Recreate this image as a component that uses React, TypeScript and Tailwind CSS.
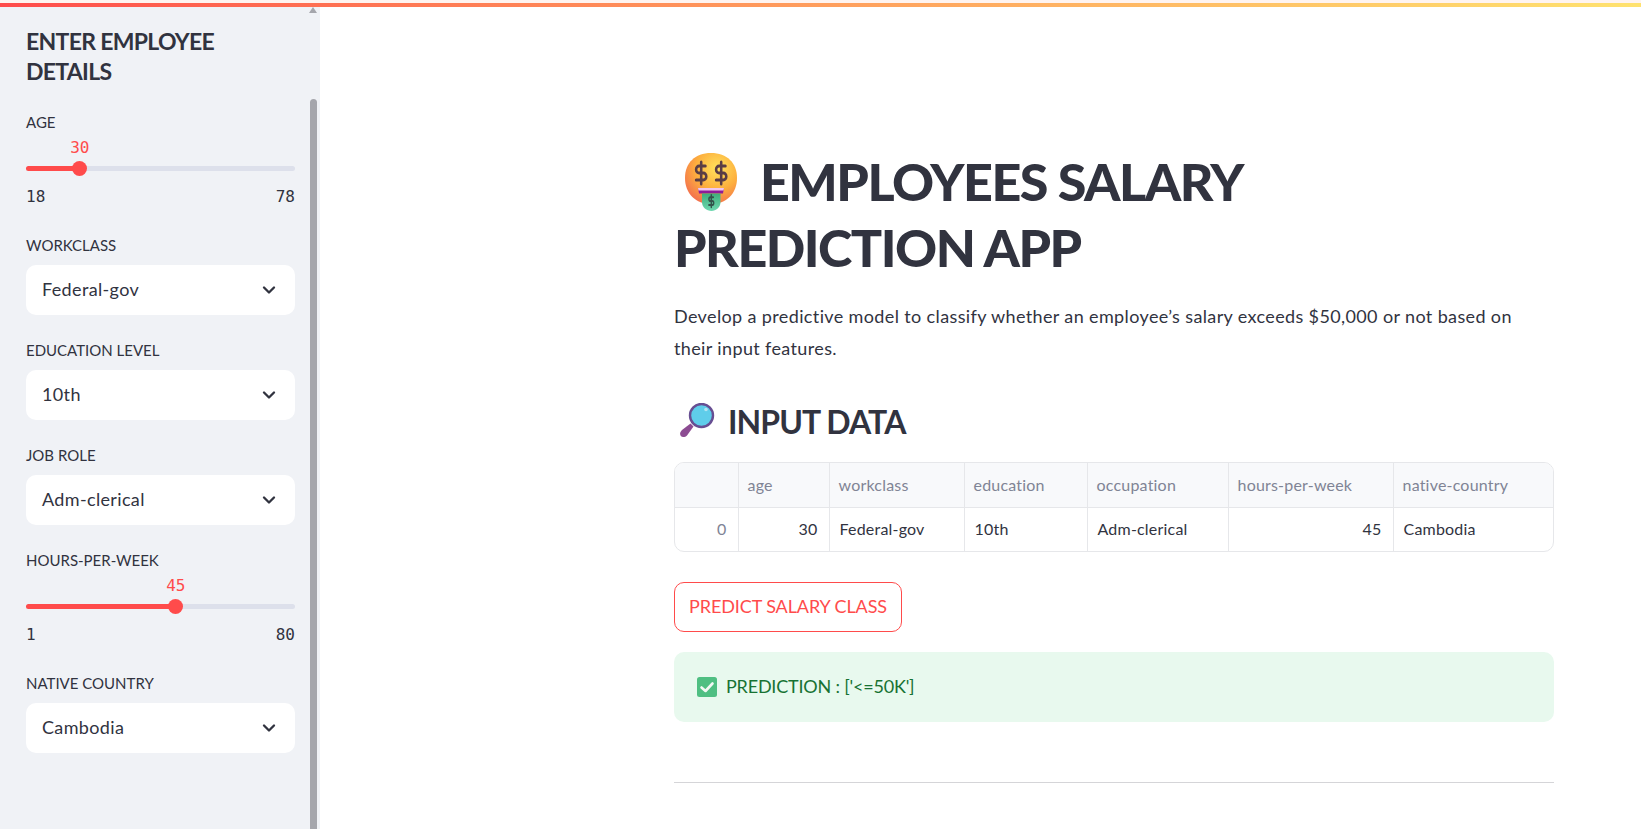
import { ChevronDown } from 'lucide-react';

const dollar = 'M12 1v22M17 5H9.5a3.5 3.5 0 0 0 0 7h5a3.5 3.5 0 0 1 0 7H6';

function MoneyFace() {
  return (
    <svg viewBox="0 0 54 58" className="w-[54px] h-[58px] shrink-0">
      <defs>
        <radialGradient id="face" cx="0.62" cy="0.3" r="0.75">
          <stop offset="0" stopColor="#ffe35c" />
          <stop offset="0.55" stopColor="#fdaf3e" />
          <stop offset="1" stopColor="#f36f4e" />
        </radialGradient>
        <linearGradient id="tongue" x1="0" y1="0" x2="0" y2="1">
          <stop offset="0" stopColor="#3fae7a" />
          <stop offset="1" stopColor="#6fd8b0" />
        </linearGradient>
      </defs>
      <path d="M27 0C43 0 53 10 53 25C53 41 42 51 27 51C12 51 1 41 1 25C1 10 11 0 27 0Z" fill="url(#face)" />
      <g fill="none" stroke="#5a3d45" strokeWidth="3" strokeLinecap="round" strokeLinejoin="round">
        <path transform="translate(7 8) scale(0.85 1)" d={dollar} />
        <path transform="translate(27 8) scale(0.85 1)" d={dollar} />
      </g>
      <path d="M14 35H40L39 40.500H15Z" fill="#8f1a98" />
      <path d="M14 35H40L39.500 37.500H14.500Z" fill="#f1c7ef" />
      <path d="M18 40.500H36.500V49C36.500 54.500 32 58 27.500 58C22.500 58 18 54.500 18 49Z" fill="url(#tongue)" />
      <g transform="translate(22.500 41.500) scale(0.4 0.55)" fill="none" stroke="#33524a" strokeWidth="3.600" strokeLinecap="round">
        <path d={dollar} />
      </g>
    </svg>
  );
}

function Magnifier() {
  return (
    <svg viewBox="0 0 35 35" className="w-[35px] h-[35px] shrink-0">
      <path d="M10.500 20.500L13.500 23.500L7 32.500C5 34.500 2 34.500 0.800 33C-0.500 31 0 29 2 27Z" fill="#8c4c92" />
      <circle cx="21.500" cy="12.500" r="11.500" fill="#5fcdea" stroke="#674e92" strokeWidth="2.400" />
      <circle cx="26" cy="6.500" r="1.800" fill="#b4e4f2" />
    </svg>
  );
}

function CheckBox() {
  return (
    <svg viewBox="0 0 20 20" className="w-5 h-5 shrink-0">
      <rect x="0" y="0" width="20" height="20" rx="2.500" fill="#4fbf82" />
      <path d="M4.500 10.500L8.500 14L15.500 6.500" fill="none" stroke="#f3f8f4" strokeWidth="2.600" strokeLinecap="round" strokeLinejoin="round" />
    </svg>
  );
}

function FieldLabel({ children }: { children: string }) {
  return <div className="h-5 text-[15px] leading-5 text-[#31333f]">{children}</div>;
}

function SelectField({ label, value }: { label: string; value: string }) {
  return (
    <div>
      <FieldLabel>{label}</FieldLabel>
      <div className="mt-[10px] h-[50px] bg-white rounded-[10px] pl-4 pr-4 flex items-center justify-between text-[18px] text-[#31333f]">
        <span className="tracking-[0.35px] -mt-[2px]">{value}</span>
        <ChevronDown className="w-5 h-5 text-[#31333f]" strokeWidth={2.8} />
      </div>
    </div>
  );
}

function SliderField({ label, value, min, max, pct }: { label: string; value: number; min: number; max: number; pct: number }) {
  return (
    <div className="mb-1">
      <FieldLabel>{label}</FieldLabel>
      <div className="relative mt-[6px] h-[19px]">
        <span
          className="absolute -translate-x-1/2 text-[16px] leading-5 text-[#ff4b4b] font-['DejaVu_Sans_Mono',monospace]"
          style={{ left: `${pct}%` }}
        >
          {value}
        </span>
      </div>
      <div className="relative mt-1 h-[15px] flex items-center">
        <div className="w-full h-[5px] rounded-full bg-[#dde0eb]">
          <div className="h-full rounded-full bg-[#ff4b4b]" style={{ width: `${pct}%` }} />
        </div>
        <div
          className="absolute w-[15px] h-[15px] -ml-[7.5px] rounded-full bg-[#ff4b4b]"
          style={{ left: `${pct}%` }}
        />
      </div>
      <div className="mt-[11px] h-[19px] flex justify-between text-[16px] leading-5 text-[#31333f] font-['DejaVu_Sans_Mono',monospace]">
        <span>{min}</span>
        <span>{max}</span>
      </div>
    </div>
  );
}

const columns = [63, 91, 135, 123, 141, 165, 160];
const headers = ['', 'age', 'workclass', 'education', 'occupation', 'hours-per-week', 'native-country'];

export default function App() {
  return (
    <div className="h-[829px] overflow-hidden bg-white font-[Lato,sans-serif] text-[#31333f] flex flex-col">
      <div className="h-[3px] bg-[#fff4f0]" />
      <div className="h-[4px] bg-gradient-to-r from-[#ff4b4b] to-[#ffe26f]" />
      <div className="flex flex-1 min-h-0">
        <aside className="relative w-[320px] shrink-0 bg-[#f0f2f6] pl-[26px] pr-[25px] pt-[19px]">
          <h2 className="text-[23px] leading-[30px] font-bold tracking-[-0.7px]">ENTER EMPLOYEE DETAILS</h2>
          <div className="mt-[26px] flex flex-col gap-[25px]">
            <SliderField label="AGE" value={30} min={18} max={78} pct={20} />
            <SelectField label="WORKCLASS" value="Federal-gov" />
            <SelectField label="EDUCATION LEVEL" value="10th" />
            <SelectField label="JOB ROLE" value="Adm-clerical" />
            <SliderField label="HOURS-PER-WEEK" value={45} min={1} max={80} pct={55.7} />
            <SelectField label="NATIVE COUNTRY" value="Cambodia" />
          </div>
          {/* scrollbar */}
          <div className="absolute left-[309px] top-0 w-0 h-0 border-x-[4px] border-x-transparent border-b-[6px] border-b-[#a5a6ac]" />
          <div className="absolute left-[310px] top-[92px] bottom-0 w-[7px] rounded-t-full bg-[#a5a6ac]" />
        </aside>
        <main className="flex-1 pl-[354px] pr-[87px] pt-[141px]">
          <h1 className="text-[52px] leading-[66px] font-black tracking-[-1.5px]">
            <span className="inline-flex align-[-10px] ml-[10px] mr-[22px]">
              <MoneyFace />
            </span>
            EMPLOYEES SALARY
            <br />
            PREDICTION APP
          </h1>
          <p className="mt-[21px] text-[18px] leading-[31.5px] tracking-[0.37px]">
            Develop a predictive model to classify whether an employee’s salary exceeds $50,000 or not based on
            <br />
            their input features.
          </p>
          <h2 className="mt-[32px] h-[48px] flex items-center text-[32px] font-bold tracking-[-0.9px]">
            <span className="ml-[6px] mr-[13px]">
              <Magnifier />
            </span>
            <span className="mt-[3px]">INPUT DATA</span>
          </h2>
          <div className="mt-[18px] rounded-[10px] border border-[#e6e7ea] overflow-hidden">
            <table className="w-full table-fixed border-collapse text-[16px] tracking-[0.2px]">
              <colgroup>
                {columns.map((w, i) => (
                  <col key={i} style={{ width: w }} />
                ))}
              </colgroup>
              <thead>
                <tr className="h-[44px] bg-[#f8f9fb] border-b border-[#e6e7ea]">
                  {headers.map((h, i) => (
                    <th key={i} className="px-[9px] text-left font-normal text-[#808495] border-l border-[#e6e7ea] first:border-l-0">
                      {h}
                    </th>
                  ))}
                </tr>
              </thead>
              <tbody>
                <tr className="h-[44px]">
                  <td className="px-[11px] text-right text-[#808495]">0</td>
                  <td className="px-[11px] text-right border-l border-[#e6e7ea]">30</td>
                  <td className="px-[10px] border-l border-[#e6e7ea]">Federal-gov</td>
                  <td className="px-[10px] border-l border-[#e6e7ea]">10th</td>
                  <td className="px-[10px] border-l border-[#e6e7ea]">Adm-clerical</td>
                  <td className="px-[11px] text-right border-l border-[#e6e7ea]">45</td>
                  <td className="px-[10px] border-l border-[#e6e7ea]">Cambodia</td>
                </tr>
              </tbody>
            </table>
          </div>
          <button className="mt-[30px] h-[50px] w-[228px] pb-[2px] rounded-[10px] border border-[#ff4b4b] text-[18px] tracking-[-0.1px] text-[#ff4b4b] bg-white">
            PREDICT SALARY CLASS
          </button>
          <div className="mt-[20px] h-[70px] rounded-[10px] bg-[#e8f9ee] pl-[23px] flex items-center gap-[9px] text-[18px] tracking-[-0.2px] text-[#177233]">
            <CheckBox />
            <span className="-mt-[2px]">PREDICTION : ['&lt;=50K']</span>
          </div>
          <hr className="mt-[60px] border-t border-[#d5d5d8]" />
        </main>
      </div>
    </div>
  );
}
